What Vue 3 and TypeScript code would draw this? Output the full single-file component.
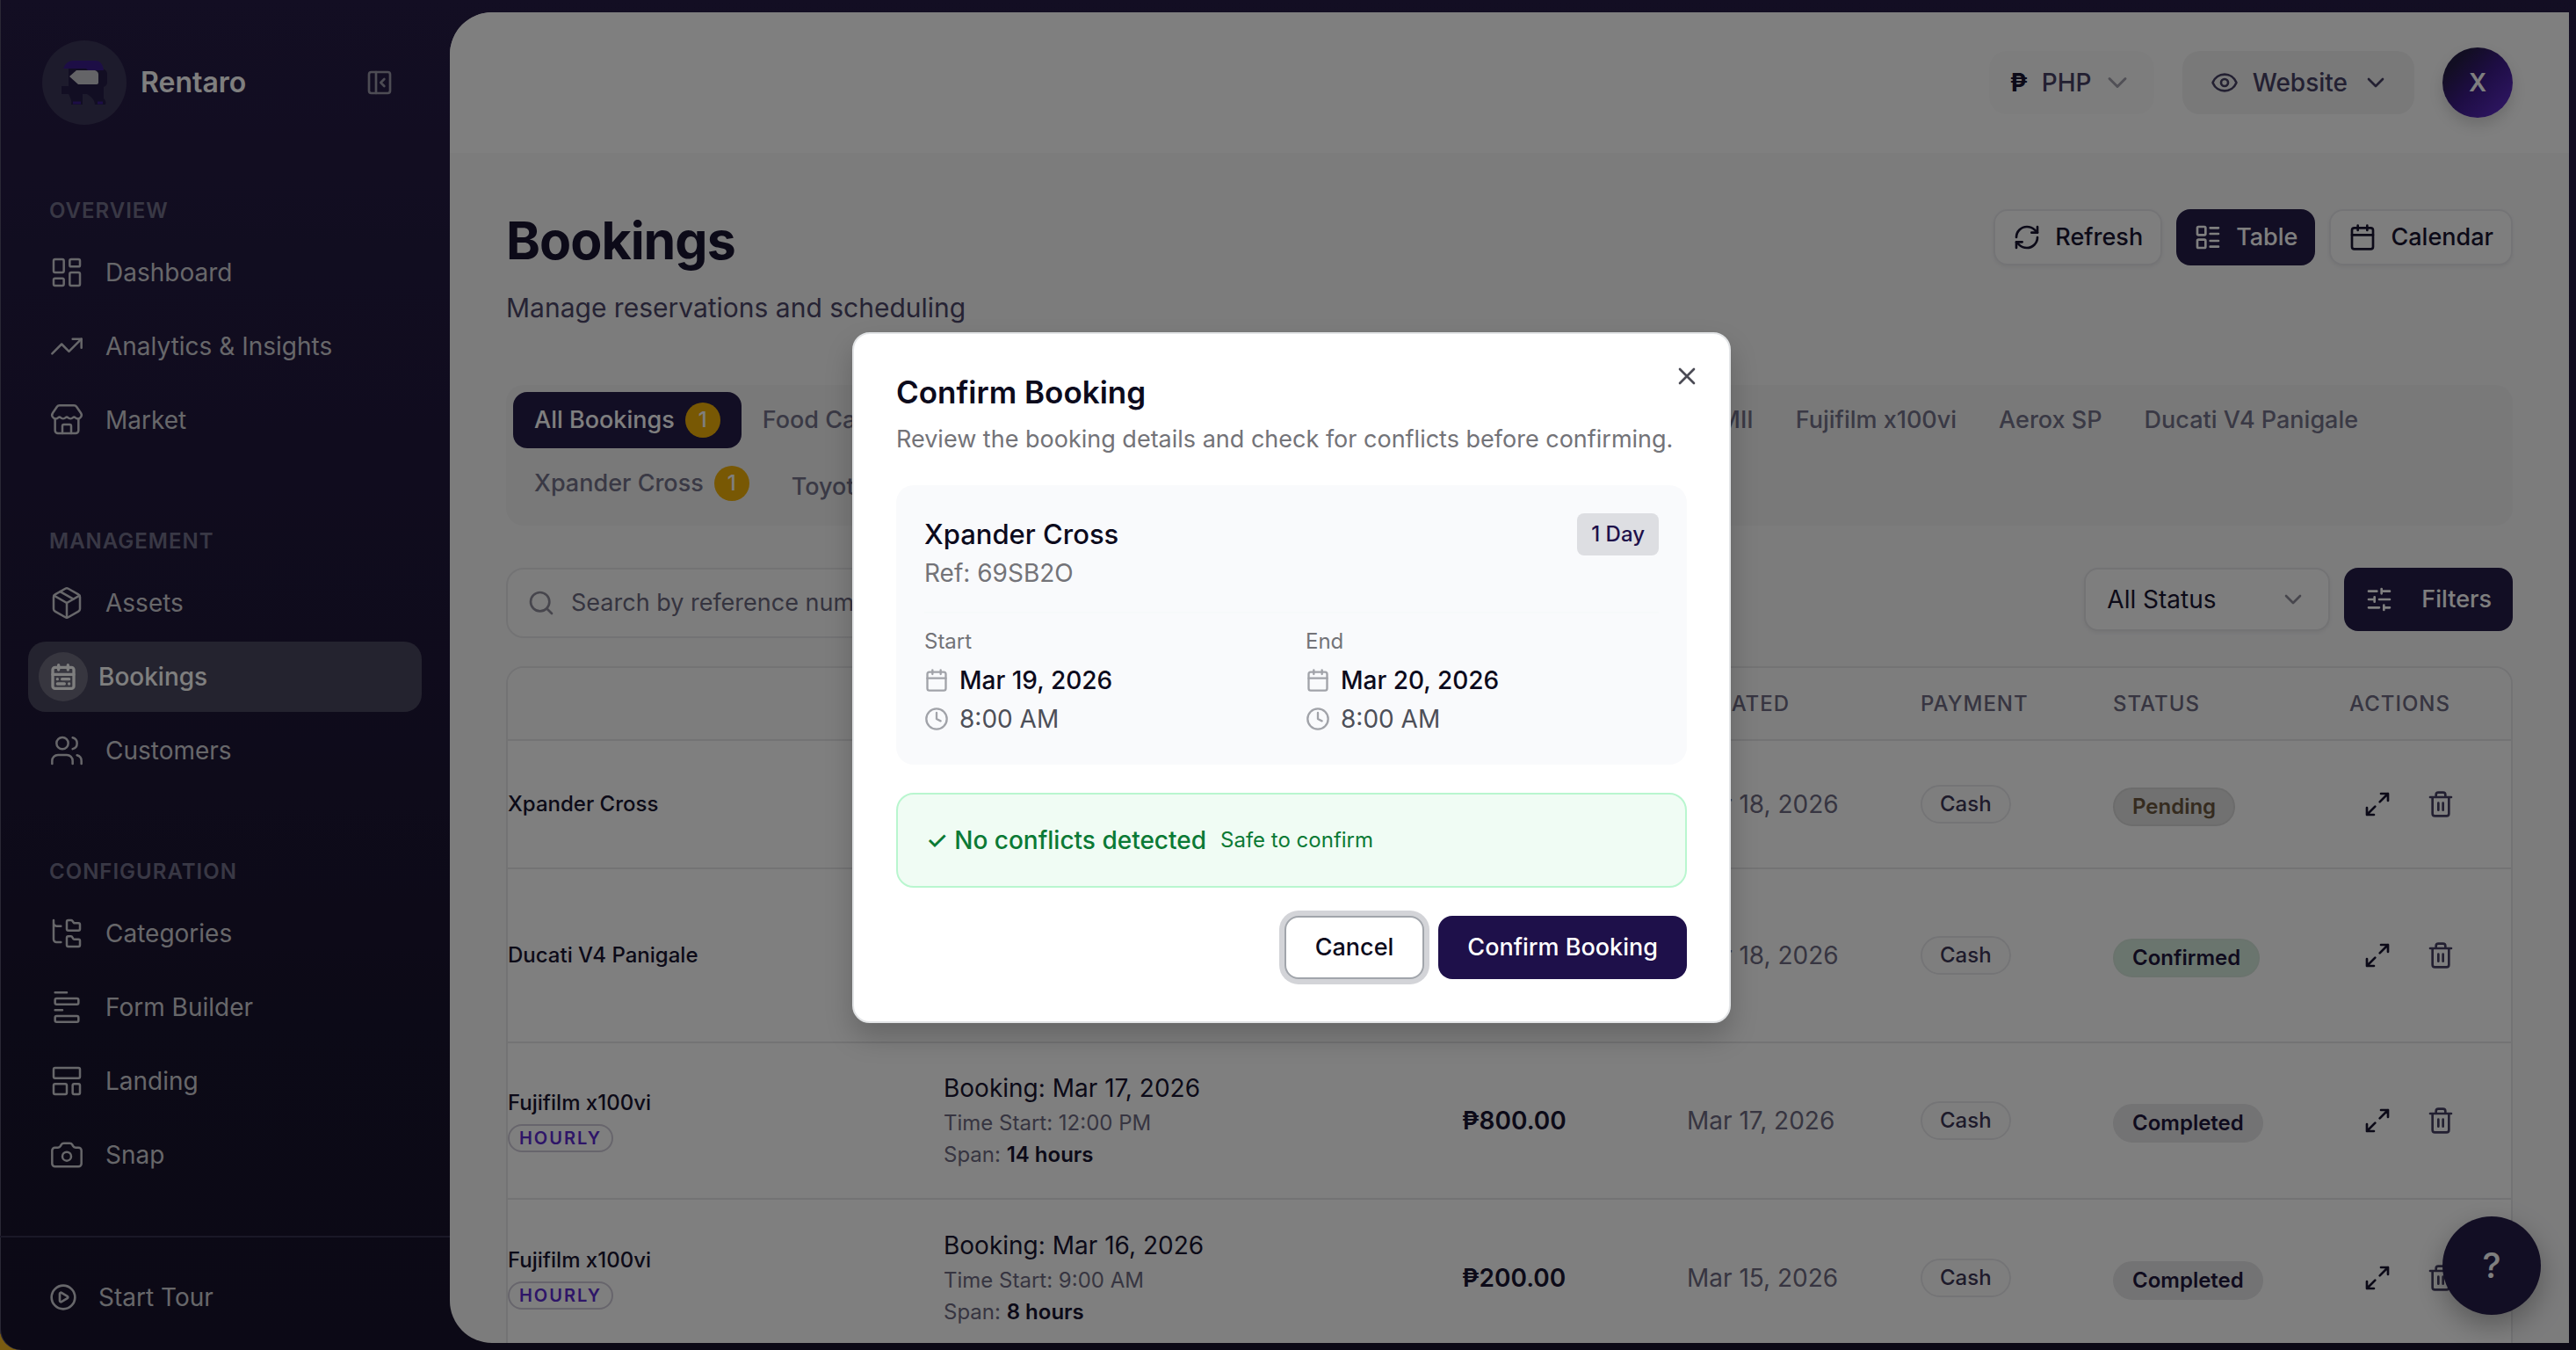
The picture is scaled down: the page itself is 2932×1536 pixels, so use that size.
<script setup lang="ts">
import { ref } from 'vue'

interface NavItem { label: string; icon: string; active?: boolean }
interface NavGroup { title: string; items: NavItem[] }
interface Booking {
  asset: string
  hourly?: boolean
  date: string
  time: string
  span: string
  price: string
  created: string
  status: 'Pending' | 'Confirmed' | 'Completed'
  size: string
}

const icons: Record<string, string> = {
  panel: '<rect width="18" height="18" x="3" y="3" rx="2"/><path d="M9 3v18"/><path d="m16 15-3-3 3-3"/>',
  dashboard: '<rect width="7" height="9" x="3" y="3" rx="1"/><rect width="7" height="5" x="14" y="3" rx="1"/><rect width="7" height="9" x="14" y="12" rx="1"/><rect width="7" height="5" x="3" y="16" rx="1"/>',
  trend: '<path d="M16 7h6v6"/><path d="m22 7-8.5 8.5-5-5L2 17"/>',
  store: '<path d="M15 21v-5a1 1 0 0 0-1-1h-4a1 1 0 0 0-1 1v5"/><path d="M17.774 10.31a1.12 1.12 0 0 0-1.549 0 2.5 2.5 0 0 1-3.451 0 1.12 1.12 0 0 0-1.548 0 2.5 2.5 0 0 1-3.452 0 1.12 1.12 0 0 0-1.549 0 2.5 2.5 0 0 1-3.77-3.248l2.889-4.184A2 2 0 0 1 7 2h10a2 2 0 0 1 1.653.873l2.895 4.192a2.5 2.5 0 0 1-3.774 3.244"/><path d="M4 10.95V19a2 2 0 0 0 2 2h12a2 2 0 0 0 2-2v-8.05"/>',
  package: '<path d="M11 21.73a2 2 0 0 0 2 0l7-4A2 2 0 0 0 21 16V8a2 2 0 0 0-1-1.73l-7-4a2 2 0 0 0-2 0l-7 4A2 2 0 0 0 3 8v8a2 2 0 0 0 1 1.73z"/><path d="M12 22V12"/><path d="M3.29 7 12 12l8.71-5"/><path d="m7.5 4.27 9 5.15"/>',
  range: '<rect width="18" height="18" x="3" y="4" rx="2"/><path d="M16 2v4M3 10h18M8 2v4M17 14h-6M13 18H7M7 14h.01M17 18h.01"/>',
  users: '<path d="M16 21v-2a4 4 0 0 0-4-4H6a4 4 0 0 0-4 4v2"/><path d="M16 3.128a4 4 0 0 1 0 7.744M22 21v-2a4 4 0 0 0-3-3.87"/><circle cx="9" cy="7" r="4"/>',
  tree: '<path d="M20 10a1 1 0 0 0 1-1V6a1 1 0 0 0-1-1h-2.500a1 1 0 0 1-.8-.4l-.9-1.200A1 1 0 0 0 15 3h-2a1 1 0 0 0-1 1v5a1 1 0 0 0 1 1Z"/><path d="M20 21a1 1 0 0 0 1-1v-3a1 1 0 0 0-1-1h-2.900a1 1 0 0 1-.88-.55l-.42-.85a1 1 0 0 0-.92-.6H13a1 1 0 0 0-1 1v5a1 1 0 0 0 1 1Z"/><path d="M3 5a2 2 0 0 0 2 2h3M3 3v13a2 2 0 0 0 2 2h3"/>',
  form: '<path d="M4 2h8M4 14h5"/><rect width="16" height="4" x="4" y="6" rx="1"/><rect width="16" height="4" x="4" y="18" rx="1"/>',
  template: '<rect width="18" height="7" x="3" y="3" rx="1"/><rect width="9" height="7" x="3" y="14" rx="1"/><rect width="5" height="7" x="16" y="14" rx="1"/>',
  camera: '<path d="M13.997 4a2 2 0 0 1 1.760 1.050l.486.900A2 2 0 0 0 18.003 7H20a2 2 0 0 1 2 2v9a2 2 0 0 1-2 2H4a2 2 0 0 1-2-2V9a2 2 0 0 1 2-2h1.997a2 2 0 0 0 1.759-1.048l.489-.904A2 2 0 0 1 10.004 4z"/><circle cx="12" cy="13" r="3"/>',
  play: '<circle cx="12" cy="12" r="10"/><path d="M9 9.003a1 1 0 0 1 1.517-.859l4.997 2.997a1 1 0 0 1 0 1.718l-4.997 2.997A1 1 0 0 1 9 14.996z"/>',
  chevron: '<path d="m6 9 6 6 6-6"/>',
  eye: '<path d="M2.062 12.348a1 1 0 0 1 0-.696 10.750 10.750 0 0 1 19.876 0 1 1 0 0 1 0 .696 10.750 10.750 0 0 1-19.876 0"/><circle cx="12" cy="12" r="3"/>',
  refresh: '<path d="M3 12a9 9 0 0 1 9-9 9.750 9.750 0 0 1 6.740 2.740L21 8"/><path d="M21 3v5h-5M21 12a9 9 0 0 1-9 9 9.750 9.750 0 0 1-6.740-2.740L3 16"/><path d="M8 16H3v5"/>',
  list: '<rect width="7" height="7" x="3" y="3" rx="1"/><rect width="7" height="7" x="3" y="14" rx="1"/><path d="M14 4h7M14 9h7M14 15h7M14 20h7"/>',
  calendar: '<path d="M8 2v4M16 2v4M3 10h18"/><rect width="18" height="18" x="3" y="4" rx="2"/>',
  search: '<circle cx="11" cy="11" r="8"/><path d="m21 21-4.340-4.340"/>',
  sliders: '<path d="M10 5H3M12 19H3M14 3v4M16 17v4M21 12h-9M21 19h-5M21 5h-7M8 10v4M8 12H3"/>',
  expand: '<path d="M15 3h6v6M21 3l-7 7M3 21l7-7M9 21H3v-6"/>',
  trash: '<path d="M3 6h18M19 6v14a2 2 0 0 1-2 2H7a2 2 0 0 1-2-2V6M8 6V4a2 2 0 0 1 2-2h4a2 2 0 0 1 2 2v2M10 11v6M14 11v6"/>',
  close: '<path d="M18 6 6 18M6 6l12 12"/>',
  clock: '<circle cx="12" cy="12" r="10"/><path d="M12 6v6l4 2"/>',
}

const groups: NavGroup[] = [
  { title: 'OVERVIEW', items: [
    { label: 'Dashboard', icon: 'dashboard' },
    { label: 'Analytics & Insights', icon: 'trend' },
    { label: 'Market', icon: 'store' },
  ] },
  { title: 'MANAGEMENT', items: [
    { label: 'Assets', icon: 'package' },
    { label: 'Bookings', icon: 'range', active: true },
    { label: 'Customers', icon: 'users' },
  ] },
  { title: 'CONFIGURATION', items: [
    { label: 'Categories', icon: 'tree' },
    { label: 'Form Builder', icon: 'form' },
    { label: 'Landing', icon: 'template' },
    { label: 'Snap', icon: 'camera' },
  ] },
]

const firstTabs = ['Food Cart', 'Party Tent', 'Honda Click', 'DJI Mini 4', 'Sony A7 MII']
const lastTabs = ['Fujifilm x100vi', 'Aerox SP', 'Ducati V4 Panigale']

const bookings: Booking[] = [
  { asset: 'Xpander Cross', date: 'Mar 19, 2026', time: '8:00 AM', span: '1 day', price: '₱2,500.00', created: 'Mar 18, 2026', status: 'Pending', size: 'short' },
  { asset: 'Ducati V4 Panigale', date: 'Mar 18, 2026', time: '9:00 AM', span: '2 days', price: '₱9,000.00', created: 'Mar 18, 2026', status: 'Confirmed', size: 'tall' },
  { asset: 'Fujifilm x100vi', hourly: true, date: 'Mar 17, 2026', time: '12:00 PM', span: '14 hours', price: '₱800.00', created: 'Mar 17, 2026', status: 'Completed', size: 'mid' },
  { asset: 'Fujifilm x100vi', hourly: true, date: 'Mar 16, 2026', time: '9:00 AM', span: '8 hours', price: '₱200.00', created: 'Mar 15, 2026', status: 'Completed', size: 'mid' },
]

const periods = [
  { label: 'Start', date: 'Mar 19, 2026', time: '8:00 AM' },
  { label: 'End', date: 'Mar 20, 2026', time: '8:00 AM' },
]

const currency = ref('PHP')
const status = ref('All Status')
</script>

<template>
  <div class="app">
    <aside class="sidebar">
      <div class="brand">
        <svg class="logo" viewBox="0 0 96 96" aria-hidden="true">
          <circle cx="48" cy="48" r="48" fill="#3b3658" />
          <path d="M30 32h36c4 0 8 2 8 6v9c0 3-1 5-4 6v13c2 2 3 4 2 7H60c0-5-4-9-9-12H46v12H33c1-4-1-8-3-12h-8v-9h8V41z" fill="#251c46" />
          <path d="M26 28c3-4 6-5 11-5h24c5 0 8 4 9 11H52l-2-2H24z" fill="#3b1d8c" />
          <path d="M31 41l8-7h19c4 0 6 2 6 5v9c0 1-1 2-2 2H41z" fill="#c9c9ce" />
          <path d="M35 71h9M63 71h6" stroke="#3b1d8c" stroke-width="3" />
        </svg>
        <span class="brand-name">Rentaro</span>
        <button class="collapse" type="button" aria-label="Collapse sidebar">
          <svg class="icon i32" viewBox="0 0 24 24" v-html="icons.panel" />
        </button>
      </div>
      <nav class="nav">
        <section v-for="g in groups" :key="g.title" class="group">
          <h2 class="group-title">{{ g.title }}</h2>
          <a v-for="item in g.items" :key="item.label" href="#" class="nav-item" :class="{ active: item.active }">
            <span v-if="item.active" class="nav-badge"><svg class="icon i32 heavy" viewBox="0 0 24 24" v-html="icons[item.icon]" /></span>
            <svg v-else class="icon i40" viewBox="0 0 24 24" v-html="icons[item.icon]" />
            <span>{{ item.label }}</span>
          </a>
        </section>
      </nav>
      <div class="tour">
        <button class="tour-btn" type="button">
          <svg class="icon i32" viewBox="0 0 24 24" v-html="icons.play" />
          Start Tour
        </button>
      </div>
    </aside>

    <main class="panel">
      <header class="topbar">
        <label class="currency">
          <b>₱</b>
          <select v-model="currency" aria-label="Currency"><option>PHP</option><option>USD</option></select>
          <svg class="icon i36 faint" viewBox="0 0 24 24" v-html="icons.chevron" />
        </label>
        <button class="website" type="button">
          <svg class="icon i32" viewBox="0 0 24 24" v-html="icons.eye" />
          <span>Website</span>
          <svg class="icon i32" viewBox="0 0 24 24" v-html="icons.chevron" />
        </button>
        <button class="avatar" type="button">X</button>
      </header>

      <div class="content">
        <div class="heading">
          <div>
            <h1>Bookings</h1>
            <p class="subtitle">Manage reservations and scheduling</p>
          </div>
          <div class="actions">
            <button class="btn outline" type="button"><svg class="icon i32" viewBox="0 0 24 24" v-html="icons.refresh" />Refresh</button>
            <button class="btn solid" type="button"><svg class="icon i32" viewBox="0 0 24 24" v-html="icons.list" />Table</button>
            <button class="btn outline" type="button"><svg class="icon i32" viewBox="0 0 24 24" v-html="icons.calendar" />Calendar</button>
          </div>
        </div>

        <div class="tabs">
          <div class="tab-row">
            <button class="tab selected" type="button">All Bookings<span class="count">1</span></button>
            <div class="tab-group">
              <button v-for="t in firstTabs" :key="t" class="tab" type="button">{{ t }}</button>
            </div>
            <button v-for="t in lastTabs" :key="t" class="tab" type="button">{{ t }}</button>
          </div>
          <div class="tab-row">
            <button class="tab" type="button">Xpander Cross<span class="count">1</span></button>
            <button class="tab full" type="button">Toyota Vios</button>
          </div>
        </div>

        <div class="filters">
          <div class="search">
            <svg class="icon i32" viewBox="0 0 24 24" v-html="icons.search" />
            <input type="text" aria-label="Search bookings" placeholder="Search by reference number or customer" />
          </div>
          <div class="filter-side">
            <label class="status-select">
              <select v-model="status" aria-label="Status"><option>All Status</option><option>Pending</option></select>
              <svg class="icon i32" viewBox="0 0 24 24" v-html="icons.chevron" />
            </label>
            <button class="filter-btn" type="button"><svg class="icon i32" viewBox="0 0 24 24" v-html="icons.sliders" />Filters</button>
          </div>
        </div>

        <div class="table-card">
          <table>
            <colgroup>
              <col class="c-asset" /><col /><col class="c-price" /><col class="c-created" /><col class="c-payment" /><col class="c-status" /><col class="c-actions" />
            </colgroup>
            <thead>
              <tr>
                <th aria-label="Asset"></th><th>BOOKING</th><th>PRICE</th><th>CREATED</th><th>PAYMENT</th><th>STATUS</th><th>ACTIONS</th>
              </tr>
            </thead>
            <tbody>
              <tr v-for="(b, i) in bookings" :key="i" :class="b.size">
                <td class="asset">
                  <div>{{ b.asset }}</div>
                  <span v-if="b.hourly" class="hourly">HOURLY</span>
                </td>
                <td>
                  <div class="when">Booking: {{ b.date }}</div>
                  <div class="meta">Time Start: {{ b.time }}</div>
                  <div class="meta">Span: <b>{{ b.span }}</b></div>
                </td>
                <td class="price">{{ b.price }}</td>
                <td class="created">{{ b.created }}</td>
                <td><span class="pill cash">Cash</span></td>
                <td><span class="pill state" :class="b.status.toLowerCase()">{{ b.status }}</span></td>
                <td>
                  <div class="row-actions">
                    <button type="button" aria-label="Open booking"><svg class="icon i32" viewBox="0 0 24 24" v-html="icons.expand" /></button>
                    <button type="button" class="del" aria-label="Delete booking"><svg class="icon i32" viewBox="0 0 24 24" v-html="icons.trash" /></button>
                  </div>
                </td>
              </tr>
            </tbody>
          </table>
        </div>
      </div>
    </main>

    <button class="help" type="button" aria-label="Help">?</button>

    <div class="overlay">
      <div class="modal" role="dialog" aria-labelledby="modal-title">
        <button class="close" type="button" aria-label="Close"><svg class="icon i32" viewBox="0 0 24 24" v-html="icons.close" /></button>
        <h2 id="modal-title">Confirm Booking</h2>
        <p class="desc">Review the booking details and check for conflicts before confirming.</p>
        <div class="details">
          <div class="details-head">
            <div>
              <h3>Xpander Cross</h3>
              <p class="ref">Ref: 69SB2O</p>
            </div>
            <span class="duration">1 Day</span>
          </div>
          <div class="periods">
            <div v-for="p in periods" :key="p.label">
              <div class="period-label">{{ p.label }}</div>
              <div class="line strong"><svg class="icon i28" viewBox="0 0 24 24" v-html="icons.calendar" />{{ p.date }}</div>
              <div class="line"><svg class="icon i28" viewBox="0 0 24 24" v-html="icons.clock" />{{ p.time }}</div>
            </div>
          </div>
        </div>
        <div class="alert"><strong>✓ No conflicts detected</strong><span>Safe to confirm</span></div>
        <div class="modal-actions">
          <button class="cancel" type="button">Cancel</button>
          <button class="confirm" type="button">Confirm Booking</button>
        </div>
      </div>
    </div>
  </div>
</template>

<style>
body { background: #7a5c12; overflow: hidden; }
</style>

<style scoped>
* { box-sizing: border-box; }
.app {
  position: relative;
  display: flex;
  height: 100vh;
  padding: 14px 8px 8px 0;
  overflow: hidden;
  border-radius: 0 0 0 24px;
  background: linear-gradient(#261c46, #1e1738 50%, #19142e 75%, #18132c);
  box-shadow: inset 1px 0 #55516a;
  font-family: Inter, "Liberation Sans", sans-serif;
  font-size: 28px;
  line-height: 40px;
  color: #181430;
}
button, select, input { font: inherit; color: inherit; border: 0; background: none; padding: 0; margin: 0; }
h1, h2, h3, p { margin: 0; }
a { color: inherit; text-decoration: none; }
.icon { flex: none; fill: none; stroke: currentColor; stroke-width: 2; stroke-linecap: round; stroke-linejoin: round; display: block; }
.i28 { width: 28px; height: 28px; }
.i32 { width: 32px; height: 32px; }
.i36 { width: 36px; height: 36px; }
.i40 { width: 40px; height: 40px; stroke-width: 1.5; }
.heavy { stroke-width: 2.5; }

.sidebar { flex: none; width: 512px; display: flex; flex-direction: column; margin-bottom: -8px; color: #cfced4; }
.brand { display: flex; align-items: center; padding: 32px 64px 0 48px; height: 128px; }
.logo { flex: none; width: 96px; height: 96px; margin-right: 16px; }
.brand-name { font-size: 32px; font-weight: 600; color: #fff; }
.collapse { margin-left: auto; color: #9a98a8; }
.nav { padding: 80px 32px 0; }
.group { margin-bottom: 80px; display: flex; flex-direction: column; gap: 4px; }
.group:last-child { margin-bottom: 0; }
.group-title { font-size: 24px; line-height: 36px; font-weight: 600; letter-spacing: 1px; color: #73718a; padding: 0 24px; margin-bottom: 8px; }
.nav-item { display: flex; align-items: center; gap: 24px; height: 80px; padding: 0 24px; border-radius: 20px; }
.nav-item.active { background: #49465e; color: #fff; font-weight: 500; gap: 12px; padding: 0 12px; }
.nav-badge { display: flex; align-items: center; justify-content: center; width: 56px; height: 56px; border-radius: 50%; background: #6e6c7e; }
.tour { flex: none; margin-top: auto; height: 130px; border-top: 2px solid #34304e; display: flex; align-items: center; padding: 8px 56px 0; }
.tour-btn { display: flex; align-items: center; gap: 24px; }

.panel { flex: 1; min-width: 0; overflow: hidden; border-radius: 48px 0 0 48px; background: #f8f8f9; }
.topbar { display: flex; align-items: center; justify-content: flex-end; gap: 32px; height: 160px; padding: 0 64px; background: #fefefe; font-weight: 500; color: #464064; }
.currency { display: flex; align-items: center; height: 72px; padding: 0 24px; border-radius: 20px; background: #fbfbfb; }
.currency b { font-size: 28px; color: #181430; width: 36px; }
.currency select { appearance: none; width: 68px; font-weight: 500; }
.faint { color: #a3a1ad; }
.website { display: flex; align-items: center; gap: 16px; height: 72px; padding: 0 28px 0 32px; border-radius: 20px; background: #f2f2f3; font-weight: 500; }
.avatar { width: 80px; height: 80px; border-radius: 50%; background: linear-gradient(135deg, #251c46 20%, #3b1a86 50%, #6430d4); color: #fff; font-weight: 600; box-shadow: 0 8px 16px rgba(0, 0, 0, .15); }

.content { padding: 64px 64px 0; }
.heading { display: flex; justify-content: space-between; align-items: flex-start; margin-bottom: 64px; }
h1 { font-size: 59px; line-height: 72px; font-weight: 700; letter-spacing: -1px; }
.subtitle { margin-top: 16px; font-size: 30px; line-height: 48px; color: #4c4668; }
.actions { display: flex; gap: 16px; }
.btn { display: flex; align-items: center; gap: 16px; height: 64px; padding: 0 20px; border-radius: 16px; font-size: 27px; font-weight: 500; }
.outline { border: 2px solid #e9e9ec; background: #fdfdfd; box-shadow: 0 2px 4px rgba(0, 0, 0, .06); }
.solid, .filter-btn, .tab.selected { background: #251c48; color: #fff; }

.tabs { padding: 8px; border-radius: 20px; background: #f2f2f3; display: flex; flex-direction: column; gap: 8px; font-weight: 500; color: #74728a; margin-bottom: 48px; }
.tab-row { display: flex; align-items: flex-start; }
.tab-group { flex: none; width: 1176px; display: flex; justify-content: space-between; white-space: nowrap; }
.tab { display: flex; align-items: center; gap: 12px; height: 64px; padding: 0 24px; border-radius: 16px; font-size: 27px; font-weight: 500; white-space: nowrap; }
.tab.full { height: 72px; }
.count { width: 40px; height: 40px; border-radius: 50%; background: #f1b108; color: #fff; font-size: 24px; text-align: center; }

.filters { display: flex; justify-content: space-between; align-items: flex-start; margin-bottom: 32px; }
.search { display: flex; align-items: center; gap: 18px; width: 1200px; height: 80px; padding: 0 22px; border: 2px solid #e6e6e9; border-radius: 20px; background: #fbfbfb; color: #8f8d9b; }
.search input { flex: 1; outline: 0; font-size: 27px; }
.search input::placeholder { color: #6b687f; opacity: 1; }
.filter-side { display: flex; gap: 16px; }
.status-select { display: flex; align-items: center; justify-content: space-between; width: 280px; height: 72px; padding: 0 24px; border: 2px solid #e6e6e9; border-radius: 16px; background: #fdfdfd; box-shadow: 0 2px 4px rgba(0, 0, 0, .06); }
.status-select select { appearance: none; width: 160px; }
.status-select .icon { color: #8f8d9b; }
.filter-btn { display: flex; align-items: center; gap: 32px; height: 72px; padding: 0 24px; border-radius: 16px; font-size: 27px; font-weight: 500; }

.table-card { border: 2px solid #e6e6e9; border-radius: 20px 20px 0 0; background: #fff; overflow: hidden; }
table { width: 100%; table-layout: fixed; border-collapse: collapse; }
.c-asset { width: 472px; } .c-price { width: 256px; } .c-created { width: 266px; } .c-payment { width: 219px; } .c-status { width: 269px; } .c-actions { width: 208px; }
th { height: 82px; padding: 0 24px; text-align: left; background: #fafafa; font-size: 24px; font-weight: 500; letter-spacing: 1px; color: #6e6b82; }
td { padding: 0 24px; vertical-align: middle; }
tbody tr { border-top: 2px solid #e6e6e9; }
.short { height: 146px; } .tall { height: 198px; } .mid { height: 178px; }
.asset { padding: 0; font-size: 24px; line-height: 32px; font-weight: 500; }
.hourly { display: block; width: 120px; height: 32px; margin-top: 8px; border: 2px solid #cfcbd8; border-radius: 16px; font-size: 20px; line-height: 28px; font-weight: 600; letter-spacing: 2px; text-align: center; color: #5c2bd0; }
.when { color: #181430; margin-bottom: 2px; }
.meta { font-size: 24px; line-height: 36px; color: #6e6b82; }
.meta b, .price { font-weight: 600; color: #181430; }
.created { color: #6e6b82; }
.pill { display: inline-flex; align-items: center; height: 44px; padding: 0 20px; border: 2px solid #e9e9ec; border-radius: 22px; font-size: 24px; font-weight: 500; color: #3c3656; background: #fdfdfd; vertical-align: middle; }
.state { margin-top: 6px; font-weight: 600; color: #1e163c; border-color: #e6e6e8; background: #e6e6e8; }
.pending { color: #6b573f; border-color: #d8d8d8; background: #e2e2e2; }
.confirmed { border-color: #d5e6db; background: #d5ebdd; }
.row-actions { display: flex; gap: 8px; }
.row-actions button { display: flex; align-items: center; justify-content: center; width: 64px; height: 64px; }
.row-actions .del { color: #464064; }

.help { position: absolute; right: 40px; bottom: 40px; width: 112px; height: 112px; border-radius: 50%; background: #251c48; color: #fff; font-size: 40px; font-weight: 500; box-shadow: 0 12px 32px rgba(0, 0, 0, .3); }

.overlay { position: absolute; inset: 0; display: flex; align-items: center; justify-content: center; padding: 6px 0 0 8px; background: rgba(0, 0, 0, .5); }
.modal { position: relative; width: 1000px; padding: 48px; border: 2px solid #e2e4e6; border-radius: 20px; background: #fff; color: #0c0a1c; box-shadow: 0 16px 32px rgba(0, 0, 0, .2); }
.close { position: absolute; top: 32px; right: 32px; color: #4b4b55; }
.modal h2 { font-size: 35px; line-height: 36px; font-weight: 600; }
.desc { margin: 16px 0 32px; font-size: 27px; color: #737378; }
.details { padding: 32px; border-radius: 20px; background: #f9fafc; }
.details-head { display: flex; justify-content: space-between; align-items: flex-start; padding-bottom: 24px; border-bottom: 2px solid #f6f9fa; }
h3 { font-size: 31px; line-height: 48px; font-weight: 500; }
.ref { color: #737378; }
.duration { padding: 8px 16px; border-radius: 8px; background: #dddee2; font-size: 24px; line-height: 32px; font-weight: 500; color: #1e104a; }
.periods { display: grid; grid-template-columns: 1fr 1fr; gap: 32px; padding-top: 16px; }
.period-label { font-size: 24px; line-height: 32px; margin-bottom: 8px; color: #737378; }
.line { display: flex; align-items: center; gap: 12px; color: #4d4f58; margin-top: 4px; }
.line.strong { font-weight: 500; color: #0c0a1c; }
.line .icon { color: #a1a3a9; }
.alert { display: flex; align-items: center; gap: 16px; height: 108px; margin: 32px 0; padding: 0 32px; border: 2px solid #b9f6cf; border-radius: 20px; background: #f0fcf4; color: #0b7a35; }
.alert strong { font-weight: 500; }
.alert span { font-size: 24px; }
.modal-actions { display: flex; justify-content: flex-end; gap: 16px; }
.modal-actions button { height: 72px; border-radius: 16px; padding: 0 33px; font-size: 27px; font-weight: 500; }
.modal-actions .cancel { border: 2px solid #a1a5ab; background: #fff; box-shadow: 0 0 0 6px #d3d4d8; }
.modal-actions .confirm { background: #1e104a; color: #fff; }
</style>
